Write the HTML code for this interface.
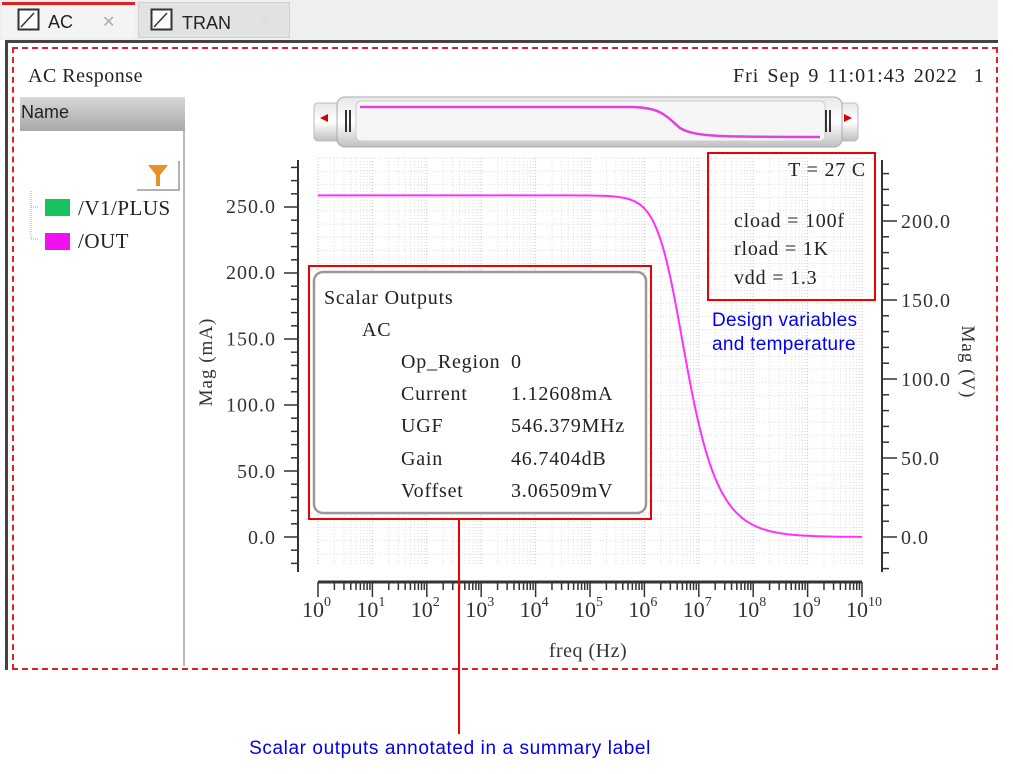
<!DOCTYPE html>
<html><head><meta charset="utf-8"><style>
body{margin:0;width:1013px;height:774px;background:#fff;position:relative;overflow:hidden;font-family:"Liberation Serif",serif;}
.a{position:absolute;}
</style></head><body>
<div class="a" style="left:0;top:0;width:998px;height:40px;background:#efefef"></div>
<div class="a" style="left:2px;top:2px;width:133px;height:36px;background:#f4f4f4;border-top:3px solid #e02020;box-sizing:border-box"></div>
<div class="a" style="left:138px;top:2px;width:152px;height:36px;background:#e2e2e2;border:1px solid #d0d0d0;box-sizing:border-box"></div>
<svg class="a" style="left:0;top:0" width="300" height="40">
<rect x="18.5" y="9.5" width="20" height="20" fill="#fff" stroke="#333" stroke-width="2"/><line x1="21" y1="27" x2="34" y2="13" stroke="#333" stroke-width="1.5"/>
<rect x="151.5" y="9.5" width="20" height="20" fill="#fff" stroke="#333" stroke-width="2"/><line x1="154" y1="27" x2="167" y2="13" stroke="#333" stroke-width="1.5"/>
<text x="48" y="28" font-family="Liberation Sans" font-size="18" fill="#222">AC</text>
<text x="182" y="29" font-family="Liberation Sans" font-size="18" fill="#222">TRAN</text>
<text x="102" y="27" font-family="Liberation Sans" font-size="16" fill="#aaa">✕</text>
<text x="258" y="28" font-family="Liberation Sans" font-size="16" fill="#ddd">✕</text>
</svg>
<div class="a" style="left:5px;top:40px;width:993px;height:3px;background:#444"></div>
<div class="a" style="left:5px;top:40px;width:3px;height:630px;background:#444"></div>
<div class="a" style="left:12px;top:47px;width:986px;height:623px;border:2px dashed #e02030;box-sizing:border-box"></div>
<div class="a" style="left:28px;top:65px;font-size:20px;letter-spacing:0.5px;color:#222">AC Response</div>
<div class="a" style="left:733px;top:65px;font-size:20px;letter-spacing:1px;word-spacing:2px;color:#222;white-space:nowrap">Fri Sep 9 11:01:43 2022 &nbsp;1</div>
<div class="a" style="left:20px;top:97px;width:165px;height:34px;background:linear-gradient(#d8d8d8,#a8a8a8)"></div>
<div class="a" style="left:21px;top:102px;font-family:'Liberation Sans';font-size:18px;color:#222">Name</div>
<div class="a" style="left:183px;top:131px;width:2px;height:535px;background:#bbb"></div>
<svg class="a" style="left:20px;top:155px" width="165" height="100">
<path d="M117 35 H159 V6" stroke="#999" fill="none" stroke-width="1.5"/>
<path d="M128 10 H148 L140 20 V31 H136 V20 Z" fill="#e8902a"/>
<path d="M11 36 V84 H18 M11 52 H18" stroke="#aaa" stroke-dasharray="1 1" fill="none"/>
<rect x="25" y="44" width="25" height="17" fill="#18c060"/>
<rect x="25" y="78" width="25" height="17" fill="#f010f0"/>
<text x="58" y="60" font-size="21" letter-spacing="0.5" fill="#222" font-family="Liberation Serif">/V1/PLUS</text>
<text x="58" y="93" font-size="21" letter-spacing="0.5" fill="#222" font-family="Liberation Serif">/OUT</text>
</svg>
<svg class="a" id="p" style="left:0;top:0" width="1013" height="774" font-family="Liberation Serif">
<defs><linearGradient id="g" x1="0" y1="0" x2="0" y2="1"><stop offset="0" stop-color="#e8e8ec"/><stop offset=".5" stop-color="#fff"/><stop offset="1" stop-color="#c0c0c4"/></linearGradient></defs>
<rect x="314" y="103" width="544" height="38" rx="4" fill="url(#g)" stroke="#bbb"/>
<rect x="337" y="97" width="505" height="50" rx="8" fill="url(#g)" stroke="#aaa"/>
<rect x="356" y="101" width="469" height="40" rx="5" fill="#f6f6f6" stroke="#ccc"/>
<path d="M320 118 l8 -4 v8z" fill="#d00"/><path d="M852 118 l-8 -4 v8z" fill="#d00"/>
<rect x="345" y="110" width="2" height="22" fill="#333"/><rect x="349" y="110" width="2" height="22" fill="#333"/>
<rect x="825" y="110" width="2" height="22" fill="#333"/><rect x="829" y="110" width="2" height="22" fill="#333"/>
<path d="M360 107 H630 C660 107 665 115 680 128 C695 137 720 137 820 137" stroke="#e040e0" stroke-width="2.5" fill="none"/>
<g id="grid"></g>
<g id="ax"></g>
<path id="curve" fill="none" stroke="#ff30ff" stroke-width="2"/>
<text x="0" y="0" transform="translate(212 362) rotate(-90)" text-anchor="middle" font-size="19" letter-spacing="1" fill="#333">Mag (mA)</text>
<text x="0" y="0" transform="translate(962 362) rotate(90)" text-anchor="middle" font-size="19" letter-spacing="1" fill="#333">Mag (V)</text>
<text x="588" y="657" text-anchor="middle" font-size="20" letter-spacing="0.5" fill="#333">freq (Hz)</text>
<rect x="309" y="266" width="342" height="253" fill="none" stroke="#e00" stroke-width="2"/>
<rect x="314" y="272" width="332" height="241" rx="9" fill="#fff" stroke="#999" stroke-width="2.5"/>
<g font-size="20" fill="#222" letter-spacing="0.8">
<text x="324" y="304">Scalar Outputs</text><text x="362" y="336">AC</text>
<text x="401" y="368">Op_Region</text><text x="511" y="368">0</text>
<text x="401" y="400">Current</text><text x="511" y="400">1.12608mA</text>
<text x="401" y="432">UGF</text><text x="511" y="432">546.379MHz</text>
<text x="401" y="465">Gain</text><text x="511" y="465">46.7404dB</text>
<text x="401" y="497">Voffset</text><text x="511" y="497">3.06509mV</text>
<text x="866" y="176" text-anchor="end">T = 27 C</text>
<text x="734" y="227">cload = 100f</text>
<text x="734" y="255">rload = 1K</text>
<text x="734" y="284">vdd = 1.3</text>
</g>
<rect x="708" y="153" width="167" height="147" fill="none" stroke="#e00" stroke-width="2"/>
<g font-family="Liberation Sans" font-size="19" fill="#0000ee" letter-spacing="0.3">
<text x="712" y="326">Design variables</text><text x="712" y="350">and temperature</text>
<text x="450" y="754" text-anchor="middle" letter-spacing="0.6">Scalar outputs annotated in a summary label</text>
</g>
<line x1="459" y1="519" x2="459" y2="734" stroke="#e00" stroke-width="2"/>
</svg>
<script>
var ns="http://www.w3.org/2000/svg",G=document.getElementById('grid'),A=document.getElementById('ax');
function el(p,t,a,txt){var e=document.createElementNS(ns,t);for(var k in a)e.setAttribute(k,a[k]);if(txt!=null)e.textContent=txt;p.appendChild(e);return e;}
var x0=318,dx=54.4,yT=158,yB=565;
for(var d=0;d<10;d++)for(var m=1;m<10;m++){var x=x0+dx*(d+Math.log10(m));el(G,'line',{x1:x,x2:x,y1:yT,y2:yB,stroke:m==1?'#c8c0c0':'#ddd','stroke-dasharray':'1 2'});}
el(G,'line',{x1:x0+dx*10,x2:x0+dx*10,y1:yT,y2:yB,stroke:'#c8c0c0','stroke-dasharray':'1 2'});
for(var y=yT;y<=yB;y+=13.2)el(G,'line',{x1:x0,x2:862,y1:y,y2:y,stroke:'#ddd','stroke-dasharray':'1 2'});
el(A,'line',{x1:298,x2:298,y1:160,y2:572,stroke:'#333','stroke-width':2});
for(var y=537+13.2*2;y>=160;y-=13.2){var r=((537-y)/66.2)%1;var big=Math.abs(r)<0.02||Math.abs(r-1)<0.02;el(A,'line',{x1:big?284:291,x2:298,y1:y,y2:y,stroke:'#333','stroke-width':1.5});}
for(var i=0;i<6;i++){var v=i*50,y=537-i*66.2;el(A,'text',{x:276,y:y+7,'text-anchor':'end','font-size':20,'letter-spacing':1,fill:'#333'},v.toFixed(1));}
el(A,'line',{x1:882,x2:882,y1:160,y2:572,stroke:'#333','stroke-width':2});
for(var y=537+15.8*2;y>=160;y-=15.8){var k=Math.round((537-y)/15.8);el(A,'line',{x1:882,x2:k%5==0?897:889,y1:y,y2:y,stroke:'#333','stroke-width':1.5});}
for(var i=0;i<5;i++){var y=537-i*79;el(A,'text',{x:901,y:y+7,'font-size':20,'letter-spacing':1,fill:'#333'},(i*50).toFixed(1));}
el(A,'line',{x1:x0,x2:862,y1:582,y2:582,stroke:'#333','stroke-width':3});
for(var d=0;d<10;d++)for(var m=1;m<10;m++){var x=x0+dx*(d+Math.log10(m));el(A,'line',{x1:x,x2:x,y1:582,y2:m==1?597:590,stroke:'#333','stroke-width':1.5});}
el(A,'line',{x1:862,x2:862,y1:582,y2:597,stroke:'#333','stroke-width':1.5});
for(var d=0;d<=10;d++){var x=x0+dx*d;el(A,'text',{x:x-16,y:617,'font-size':22,fill:'#333'},'10');el(A,'text',{x:x+6,y:606,'font-size':14,fill:'#333'},String(d));}
var s='';for(var i=0;i<=544;i+=2){var d=i/dx,f=Math.pow(10,d),mag=258/Math.sqrt(1+Math.pow(f/3.5e6,2)),y=537-mag/50*66.2;s+=(i?'L':'M')+(x0+i)+' '+y.toFixed(1);}
document.getElementById('curve').setAttribute('d',s);
</script>
</body></html>
